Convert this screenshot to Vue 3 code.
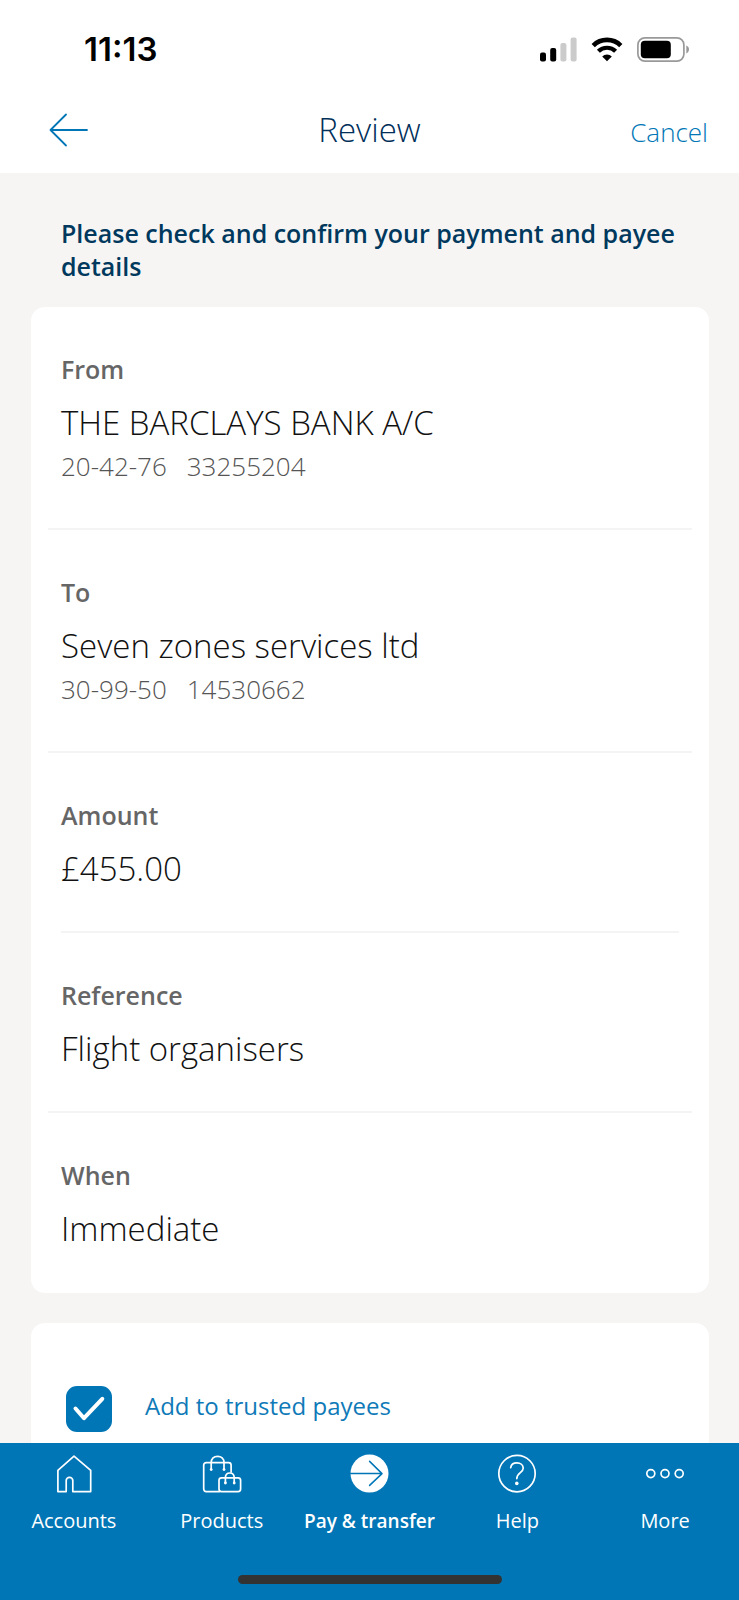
<script setup>
import { ref } from 'vue'

const trusted = ref(true)

const details = [
  { label: 'From', value: 'THE BARCLAYS BANK A/C', sortCode: '20-42-76', account: '33255204' },
  { label: 'To', value: 'Seven zones services ltd', sortCode: '30-99-50', account: '14530662' },
  { label: 'Amount', value: '£455.00', inset: true },
  { label: 'Reference', value: 'Flight organisers' },
  { label: 'When', value: 'Immediate' },
]
</script>

<template>
  <div class="screen">
    <div class="status">
      <time class="clock">11:13</time>
      <div class="indicators">
        <svg width="38" height="25" viewBox="-1 0 38 25" aria-label="Signal">
          <rect x="0" y="15.5" width="6" height="9" rx="2" fill="#000" />
          <rect x="10.2" y="11" width="6" height="13.5" rx="2" fill="#000" />
          <rect x="20.4" y="6" width="6" height="18.5" rx="2" fill="#cbcbcb" />
          <rect x="30.6" y="0.5" width="6" height="24" rx="2" fill="#cbcbcb" />
        </svg>
        <svg width="32" height="25" viewBox="0 0 32 25" aria-label="Wi-Fi">
          <path d="M2.2 8.6A19.6 19.6 0 0 1 29.8 8.6" fill="none" stroke="#000" stroke-width="4.6" />
          <path d="M7.4 14.3A12.2 12.2 0 0 1 24.6 14.3" fill="none" stroke="#000" stroke-width="4.2" />
          <path d="M16 24.3L11.2 19.4A6.8 6.8 0 0 1 20.8 19.4Z" fill="#000" />
        </svg>
        <svg width="53" height="25" viewBox="0 0 53 25" aria-label="Battery">
          <rect x="0.9" y="0.9" width="46" height="23.2" rx="7" fill="none" stroke="#999" stroke-width="1.7" />
          <rect x="3.8" y="3.8" width="30" height="17.4" rx="4" fill="#000" />
          <path d="M49.3 8.6C52.9 9.8 52.9 15.2 49.3 16.4Z" fill="#999" />
        </svg>
      </div>
    </div>

    <header class="bar">
      <button class="back" type="button" aria-label="Back">
        <svg width="40" height="34" viewBox="0 0 40 34" fill="none" stroke="currentColor" stroke-width="1.8" stroke-linecap="round" stroke-linejoin="round">
          <path d="M38 17H1.5M17 1.5L1.5 17L17 32.5" />
        </svg>
      </button>
      <h1>Review</h1>
      <button class="cancel" type="button">Cancel</button>
    </header>

    <main class="content">
      <h2>Please check and confirm your payment and payee details</h2>

      <dl class="card">
        <div v-for="d in details" :key="d.label" class="row" :class="{ inset: d.inset, full: d.sortCode }">
          <dt>{{ d.label }}</dt>
          <dd class="value">{{ d.value }}</dd>
          <dd v-if="d.sortCode" class="account">
            <span>{{ d.sortCode }}</span><span>{{ d.account }}</span>
          </dd>
        </div>
      </dl>

      <section class="card trust">
        <span class="tick">
          <input id="trusted" v-model="trusted" type="checkbox" />
          <svg v-if="trusted" width="46" height="46" viewBox="0 0 46 46" fill="none" stroke="#fff" stroke-width="4" stroke-linecap="round" stroke-linejoin="round" aria-hidden="true">
            <path d="M9.5 22.5L18 32.2L36.3 12.8" />
          </svg>
        </span>
        <label for="trusted">Add to trusted payees</label>
      </section>
    </main>

    <nav class="tabs">
      <div class="tablist">
        <a href="#accounts">
          <svg viewBox="0 0 40 40" aria-hidden="true">
            <path d="M20 2.2L36.7 16.4V37.6H18.8V26.6a3.3 3.3 0 0 0-6.6 0V37.6H3.9V16.4Z" />
          </svg>
          <span>Accounts</span>
        </a>
        <a href="#products">
          <svg viewBox="0 0 40 40" aria-hidden="true">
            <path d="M17.5 37.6H4.2A2.5 2.5 0 0 1 1.7 35.1V11.1A2.5 2.5 0 0 1 4.2 8.6H26.6A2.5 2.5 0 0 1 29.1 11.1V18" />
            <path d="M9.2 15.2V8.7C9.2 4.6 12 2.3 15.6 2.3S22 4.6 22 8.7V15.2" />
            <rect x="17" y="23.8" width="21.6" height="13.8" rx="2.5" />
            <path d="M23.4 28.8V23.8C23.4 20.6 25.2 19 27.8 19S32.2 20.6 32.2 23.8V28.8" />
            <g class="solid">
              <circle cx="9.2" cy="15.6" r="1.4" />
              <circle cx="22" cy="15.6" r="1.4" />
              <circle cx="23.4" cy="29" r="1.4" />
              <circle cx="32.2" cy="29" r="1.4" />
            </g>
          </svg>
          <span>Products</span>
        </a>
        <a href="#pay" class="active" aria-current="page">
          <svg viewBox="0 0 40 40" aria-hidden="true">
            <circle class="solid" cx="20.5" cy="19.6" r="19" />
            <path class="cut" d="M1.5 19.6H33M20.6 7.4L33 19.6L20.6 31.4" />
          </svg>
          <span>Pay &amp; transfer</span>
        </a>
        <a href="#help">
          <svg viewBox="0 0 40 40" aria-hidden="true">
            <circle cx="20" cy="19.6" r="18.2" />
            <path d="M13.7 13.6C14.2 10.4 16.6 8.9 19.8 8.9C23.6 8.9 26.2 11 26.2 14.2C26.2 18.8 19.8 18.6 19.8 24.6" />
            <circle class="solid" cx="19.8" cy="29.4" r="1.8" />
          </svg>
          <span>Help</span>
        </a>
        <a href="#more">
          <svg viewBox="0 0 40 40" aria-hidden="true">
            <circle cx="5.8" cy="19.6" r="4" />
            <circle cx="20" cy="19.6" r="4" />
            <circle cx="34.2" cy="19.6" r="4" />
          </svg>
          <span>More</span>
        </a>
      </div>
      <div class="home"></div>
    </nav>
  </div>
</template>

<style>
body {
  margin: 0;
}
</style>

<style scoped>
.screen {
  display: grid;
  grid-template-rows: auto auto 1fr auto;
  height: 100vh;
  background: #f6f5f4;
  color: #111;
  font-family: "Open Sans", "Noto Sans", sans-serif;
}

button {
  padding: 0;
  border: 0;
  background: none;
  color: #0076b6;
  font: inherit;
  cursor: pointer;
}

svg {
  display: block;
}

.status {
  display: flex;
  align-items: center;
  justify-content: space-between;
  height: 98px;
  padding: 0 49px 0 84px;
  background: #fff;
}

.clock {
  color: #000;
  font: 600 33px/40px Inter, sans-serif;
}

.indicators {
  display: flex;
  gap: 14px;
}

.bar {
  display: grid;
  grid-template-columns: 1fr auto 1fr;
  align-items: baseline;
  padding: 10px 31px 21px 49px;
  background: #fff;
}

.back {
  justify-self: start;
  align-self: center;
}

h1 {
  margin: 0 0 0 -18px;
  color: #00305a;
  font-size: 33px;
  font-weight: 300;
  line-height: 44px;
}

.cancel {
  justify-self: end;
  font-size: 26px;
  font-weight: 300;
  line-height: 32px;
}

.content {
  min-height: 0;
  padding: 44px 30px 0 31px;
  overflow-y: auto;
  scrollbar-width: none;
}

h2 {
  margin: 0 0 24px;
  padding-left: 30px;
  color: #00395d;
  font-size: 25px;
  font-weight: 600;
  line-height: 33px;
}

.card {
  margin: 0 0 30px;
  border-radius: 14px;
  background: #fff;
}

.row {
  margin: 0 17px;
  padding: 46px 13px 40px;
  border-bottom: 2px solid #f4f4f4;
}

.row.full {
  padding-bottom: 46px;
}

.row.inset {
  margin: 0 30px;
  padding-right: 0;
  padding-left: 0;
}

.row:last-child {
  padding-bottom: 42px;
  border-bottom: 0;
}

dt {
  margin-bottom: 16px;
  color: #666;
  font-size: 25px;
  font-weight: 600;
  line-height: 32px;
}

dd {
  margin: 0;
}

.value {
  font-size: 33px;
  font-weight: 300;
  line-height: 44px;
}

.account {
  display: flex;
  gap: 20px;
  margin-top: 5px;
  color: #555;
  font-size: 26px;
  font-weight: 300;
  line-height: 32px;
}

.trust {
  display: flex;
  gap: 33px;
  padding: 63px 35px;
}

.tick {
  display: grid;
}

.tick > * {
  grid-area: 1 / 1;
}

.tick svg {
  pointer-events: none;
}

.tick input {
  width: 46px;
  height: 46px;
  margin: 0;
  border: 2px solid #0076b6;
  border-radius: 11px;
  appearance: none;
}

.tick input:checked {
  background: #0076b6;
}

.trust label {
  padding-top: 4px;
  color: #0f7ab8;
  font-size: 24px;
  line-height: 32px;
}

.tabs {
  padding: 11px 0 16px;
  background: #0076b6;
}

.tablist {
  display: grid;
  grid-template-columns: repeat(5, 1fr);
}

.tablist a {
  display: flex;
  flex-direction: column;
  align-items: center;
  gap: 13px;
  color: #fff;
  font-size: 20px;
  line-height: 28px;
  text-decoration: none;
  white-space: nowrap;
}

.tablist .active {
  font-size: 19px;
  font-weight: 600;
}

.tablist svg {
  width: 40px;
  height: 40px;
  fill: none;
  stroke: #fff;
  stroke-width: 1.7;
  stroke-linecap: round;
  stroke-linejoin: round;
}

.tablist .solid {
  fill: #fff;
  stroke: none;
}

.tablist .cut {
  stroke: #0076b6;
  stroke-width: 1.5;
}

.home {
  width: 264px;
  height: 9px;
  margin: 40px auto 0;
  border-radius: 5px;
  background: #333;
}
</style>
